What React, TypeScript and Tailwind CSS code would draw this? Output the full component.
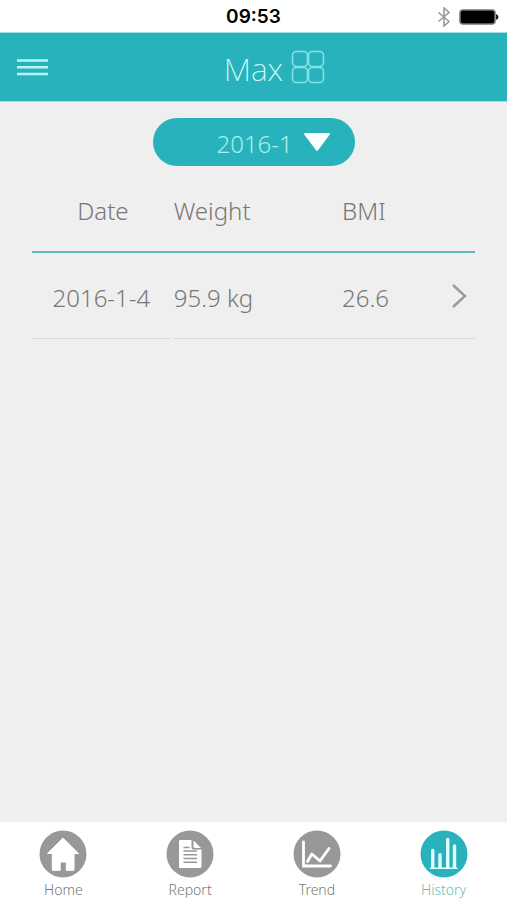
import React, { useState } from 'react';

interface HistoryRecord {
  id: number;
  date: string;
  weight: string;
  bmi: string;
}

interface Tab {
  name: string;
  icon: React.ReactNode;
}

const records: HistoryRecord[] = [
  { id: 1, date: '2016-1-4', weight: '95.9 kg', bmi: '26.6' },
];

const HomeIcon = () => (
  <svg viewBox="0 0 48 48" className="size-12" aria-hidden="true">
    <circle cx="24" cy="24" r="23.5" fill="currentColor" />
    <path
      d="M24 8 39.5 23.5H35V40.3H27.3V32H21.2V40.3H13.3V23.5H8.5Z"
      fill="#fff"
      stroke="#fff"
      strokeWidth="1"
      strokeLinejoin="round"
    />
  </svg>
);

const ReportIcon = () => (
  <svg viewBox="0 0 48 48" className="size-12" aria-hidden="true">
    <circle cx="24" cy="24" r="23.5" fill="currentColor" />
    <path d="M14 10H25.5V17.5Q25.5 19.5 27.5 19.5H35.5V36.5Q35.5 38 34 38H14Q13 38 13 37V11Q13 10 14 10Z" fill="#fff" />
    <path d="M27.5 10.5 35 18H29Q27.5 18 27.5 16.5Z" fill="#fff" />
    <path
      d="M17.5 17.5H23.5M17.5 21H31M17.5 24.7H31M17.5 28.4H31M17.5 32.3H31"
      stroke="currentColor"
      strokeWidth="1.5"
    />
  </svg>
);

const TrendIcon = () => (
  <svg viewBox="0 0 48 48" className="size-12" aria-hidden="true">
    <circle cx="24" cy="24" r="23.5" fill="currentColor" />
    <g fill="none" stroke="#fff" strokeLinecap="round">
      <path d="M10.5 12V36H37.5" strokeWidth="2.8" />
      <path d="M14.5 31.5 18.8 24 27 31 36 18.5" strokeWidth="2.8" strokeLinejoin="round" />
    </g>
  </svg>
);

const HistoryIcon = () => (
  <svg viewBox="0 0 48 48" className="size-12" aria-hidden="true">
    <circle cx="24" cy="24" r="23.5" fill="currentColor" />
    <g fill="none" stroke="#e4ffff" strokeLinecap="round">
      <path d="M12.7 20.5V37M20 24.8V37M27.7 9.5V37M34.5 16V37" strokeWidth="3.4" />
      <path d="M10.5 38.3H37" strokeWidth="1.4" />
    </g>
  </svg>
);

const tabs: Tab[] = [
  { name: 'Home', icon: <HomeIcon /> },
  { name: 'Report', icon: <ReportIcon /> },
  { name: 'Trend', icon: <TrendIcon /> },
  { name: 'History', icon: <HistoryIcon /> },
];

const StatusBar = () => (
  <div className="grid h-8 grid-cols-3 items-center bg-white pt-0.5">
    <span />
    <span className="text-center font-['Inter',sans-serif] text-[19px] leading-6 font-semibold text-black">09:53</span>
    <div className="flex items-center justify-end gap-2 pr-2">
      <svg viewBox="0 0 14 20" className="h-5 w-3.5" fill="none" stroke="#9a9a9a" strokeWidth="1.6" aria-hidden="true">
        <path d="M1.5 5.5 12 14.5 7 19V1L12 5.5 1.5 14.5" />
      </svg>
      <svg viewBox="0 0 40 16" className="h-4 w-10" aria-hidden="true">
        <rect x="1" y="1" width="35" height="14" rx="3" fill="#000" stroke="#777" strokeWidth="1.6" />
        <path d="M37 5Q39.5 6 39.5 8T37 11Z" fill="#222" />
      </svg>
    </div>
  </div>
);

const App: React.FC = () => {
  const [month, setMonth] = useState<string>('2016-1');
  const [activeTab, setActiveTab] = useState<string>('History');

  return (
    <div className="flex min-h-screen flex-col bg-[#efefef] font-['Noto_Sans',sans-serif] font-light text-[#777]">
      <StatusBar />

      <header className="grid h-[70px] grid-cols-[1fr_auto_1fr] items-center border-y border-[#a5dfe2] bg-[#28b3bc] px-4">
        <button type="button" aria-label="Menu" className="w-fit">
          <svg viewBox="0 0 34 20" className="h-5 w-[34px]" stroke="#b5f3f4" strokeWidth="2.6" aria-hidden="true">
            <path d="M1 3.5H32M1 10.2H32M1 17H32" />
          </svg>
        </button>
        <h1 className="pt-1 text-[32px] leading-10 font-extralight text-[#d5fbfb]">Max</h1>
        <button type="button" aria-label="Switch user" className="w-fit pl-2">
          <svg viewBox="0 0 34 34" className="size-[34px]" fill="none" stroke="#86e0e4" strokeWidth="1.6" aria-hidden="true">
            <rect x="1.5" y="1.5" width="15" height="15" rx="4" />
            <rect x="17.5" y="1.5" width="15" height="15" rx="4" />
            <rect x="1.5" y="17.5" width="15" height="15" rx="4" />
            <rect x="17.5" y="17.5" width="15" height="15" rx="4" />
          </svg>
        </button>
      </header>

      <main className="flex-1 px-8 pt-4">
        <div className="relative mx-auto w-[202px]">
          <select
            aria-label="Month"
            value={month}
            onChange={(e) => setMonth(e.target.value)}
            className="h-12 w-full appearance-none rounded-full bg-[#28b3bc] pt-1 pl-16 text-2xl font-light text-[#a9eef0]"
          >
            <option value="2016-1">2016-1</option>
          </select>
          <svg viewBox="0 0 28 20" className="pointer-events-none absolute top-3.5 right-6 h-5 w-7" aria-hidden="true">
            <path d="M2 2H26L14 18Z" fill="#fff" stroke="#fff" strokeWidth="2" strokeLinejoin="round" />
          </svg>
        </div>

        <table className="w-full table-fixed border-separate border-spacing-0 text-2xl">
          <colgroup>
            <col className="w-[32%]" />
            <col className="w-[38%]" />
            <col className="w-[23%]" />
            <col className="w-[7%]" />
          </colgroup>
          <thead>
            <tr className="h-[87px]">
              <th className="border-b-2 border-[#5dbcc0] p-0 pt-1 font-light">Date</th>
              <th className="border-b-2 border-[#5dbcc0] p-0 pt-1 text-left font-light">Weight</th>
              <th className="border-b-2 border-[#5dbcc0] p-0 pt-1 text-left font-light">BMI</th>
              <th aria-label="Details" className="border-b-2 border-[#5dbcc0] p-0" />
            </tr>
          </thead>
          <tbody>
            {records.map((record) => (
              <tr key={record.id}>
                <td className="p-0 pr-[3px]">
                  <div className="flex h-[86px] items-center justify-center border-b border-[#d9d9d9] pt-1">{record.date}</div>
                </td>
                <td className="p-0">
                  <div className="flex h-[86px] items-center border-b border-[#d9d9d9] pt-1">{record.weight}</div>
                </td>
                <td className="p-0 pr-px">
                  <div className="flex h-[86px] items-center border-b border-[#d9d9d9] pt-1">{record.bmi}</div>
                </td>
                <td className="p-0">
                  <div className="flex h-[86px] items-center justify-center border-b border-[#d9d9d9]">
                    <button type="button" aria-label={`Details for ${record.date}`}>
                      <svg viewBox="0 0 16 26" className="h-[26px] w-4" fill="none" stroke="#999" strokeWidth="2.4" aria-hidden="true">
                        <path d="M2 2 14 13 2 24" />
                      </svg>
                    </button>
                  </div>
                </td>
              </tr>
            ))}
          </tbody>
        </table>
      </main>

      <nav className="grid h-[78px] grid-cols-4 bg-white pt-2">
        {tabs.map((tab) => (
          <button
            key={tab.name}
            type="button"
            aria-current={tab.name === activeTab ? 'page' : undefined}
            onClick={() => setActiveTab(tab.name)}
            className="flex flex-col items-center gap-0.5"
          >
            <span className={tab.name === activeTab ? 'text-[#28b3bc]' : 'text-[#989898]'}>{tab.icon}</span>
            <span className={tab.name === activeTab ? 'text-sm text-[#5fc3b4]' : 'text-sm text-[#777]'}>{tab.name}</span>
          </button>
        ))}
      </nav>
    </div>
  );
};

export default App;
